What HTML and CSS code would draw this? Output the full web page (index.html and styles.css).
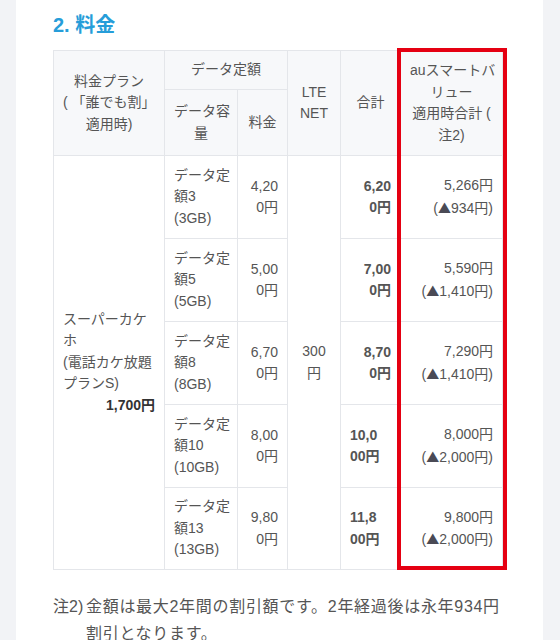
FILE: index.html
```html
<!DOCTYPE html>
<html lang="ja">
<head>
<meta charset="utf-8">
<link rel="stylesheet" href="styles.css">
</head>
<body>
<div class="page">
  <main class="content">
    <h2 class="title">2. 料金</h2>
    <div class="table-wrap">
      <table class="price">
        <colgroup>
          <col class="c1"><col class="c2"><col class="c3"><col class="c4"><col class="c5"><col class="c6">
        </colgroup>
        <thead>
          <tr class="h1">
            <th rowspan="2">料金プラン<br>( 「誰でも割」<br>適用時)</th>
            <th colspan="2">データ定額</th>
            <th rowspan="2">LTE<br>NET</th>
            <th rowspan="2">合計</th>
            <th rowspan="2" class="au">auスマートバ<br>リュー<br>適用時合計 (<br>注2)</th>
          </tr>
          <tr class="h2">
            <th>データ容<br>量</th>
            <th>料金</th>
          </tr>
        </thead>
        <tbody>
          <tr>
            <td rowspan="5" class="plan">スーパーカケ<br>ホ<br>(電話カケ放題<br>プランS)<br><b class="plan-price">1,700円</b></td>
            <td class="data">データ定<br>額3<br>(3GB)</td>
            <td class="num">4,20<br>0円</td>
            <td rowspan="5" class="lte">300<br>円</td>
            <td class="num total">6,20<br>0円</td>
            <td class="num au">5,266円<br>(<span class="tri">▲</span>934円)</td>
          </tr>
          <tr>
            <td class="data">データ定<br>額5<br>(5GB)</td>
            <td class="num">5,00<br>0円</td>
            <td class="num total">7,00<br>0円</td>
            <td class="num au">5,590円<br>(<span class="tri">▲</span>1,410円)</td>
          </tr>
          <tr>
            <td class="data">データ定<br>額8<br>(8GB)</td>
            <td class="num">6,70<br>0円</td>
            <td class="num total">8,70<br>0円</td>
            <td class="num au">7,290円<br>(<span class="tri">▲</span>1,410円)</td>
          </tr>
          <tr>
            <td class="data">データ定<br>額10<br>(10GB)</td>
            <td class="num">8,00<br>0円</td>
            <td class="num total left">10,0<br>00円</td>
            <td class="num au">8,000円<br>(<span class="tri">▲</span>2,000円)</td>
          </tr>
          <tr>
            <td class="data">データ定<br>額13<br>(13GB)</td>
            <td class="num">9,80<br>0円</td>
            <td class="num total left">11,8<br>00円</td>
            <td class="num au">9,800円<br>(<span class="tri">▲</span>2,000円)</td>
          </tr>
        </tbody>
      </table>
      <div class="highlight"></div>
    </div>
    <div class="note">
      <span class="note-label">注2)</span>
      <span class="note-text">金額は最大2年間の割引額です。2年経過後は永年934円割引となります。</span>
    </div>
  </main>
</div>
</body>
</html>
```

FILE: styles.css
```css
html, body {
  margin: 0;
  padding: 0;
}
body {
  background: #f2f3f6;
  font-family: "Liberation Sans", "Noto Sans CJK JP", sans-serif;
  color: #555;
}
.page {
  padding: 0 17px 0 16px;
}
.content {
  background: #fff;
  min-height: 640px;
  padding: 12px 0 0 37px;
  box-sizing: border-box;
}
.title {
  margin: 0 0 12px 0;
  font-size: 20px;
  line-height: 26px;
  font-weight: bold;
  color: #269dd9;
}
.table-wrap {
  position: relative;
  width: 449px;
}
.price {
  border-collapse: collapse;
  table-layout: fixed;
  width: 449px;
  font-size: 14px;
  line-height: 21.5px;
}
.c1 { width: 111px; }
.c2 { width: 73px; }
.c3 { width: 50px; }
.c4 { width: 53px; }
.c5 { width: 60px; }
.c6 { width: 102px; }
.price th, .price td {
  border: 1px solid #e4e6ea;
  padding: 0 9px;
  vertical-align: middle;
  white-space: nowrap;
}
.price th {
  background: #f7f8fa;
  font-weight: normal;
  text-align: center;
  color: #555;
}
.h1 { height: 39px; }
.h2 { height: 66px; }
.price tbody tr { height: 83px; }
.price tbody tr:last-child { height: 82px; }
.price td {
  color: #555;
}
.plan {
  text-align: left;
}
.plan-price {
  display: block;
  text-align: right;
  color: #333;
}
.data {
  text-align: left;
}
.num {
  text-align: right;
}
.total {
  font-weight: bold;
  color: #333;
}
.total.left {
  text-align: left;
}
.lte {
  text-align: center;
}
.tri {
  font-family: "Noto Sans CJK JP", sans-serif;
  font-size: 13px;
  color: #4a4a55;
}
.highlight {
  position: absolute;
  left: 344px;
  top: -2px;
  width: 110px;
  height: 522px;
  border: 4px solid #e50012;
  box-sizing: border-box;
  pointer-events: none;
}
.note {
  display: flex;
  margin-top: 23px;
  width: 449px;
  font-size: 16px;
  line-height: 27px;
  color: #555;
}
.note-label {
  flex: none;
  width: 33px;
}
.note-text {
  flex: 1;
  letter-spacing: 0.7px;
}
```
